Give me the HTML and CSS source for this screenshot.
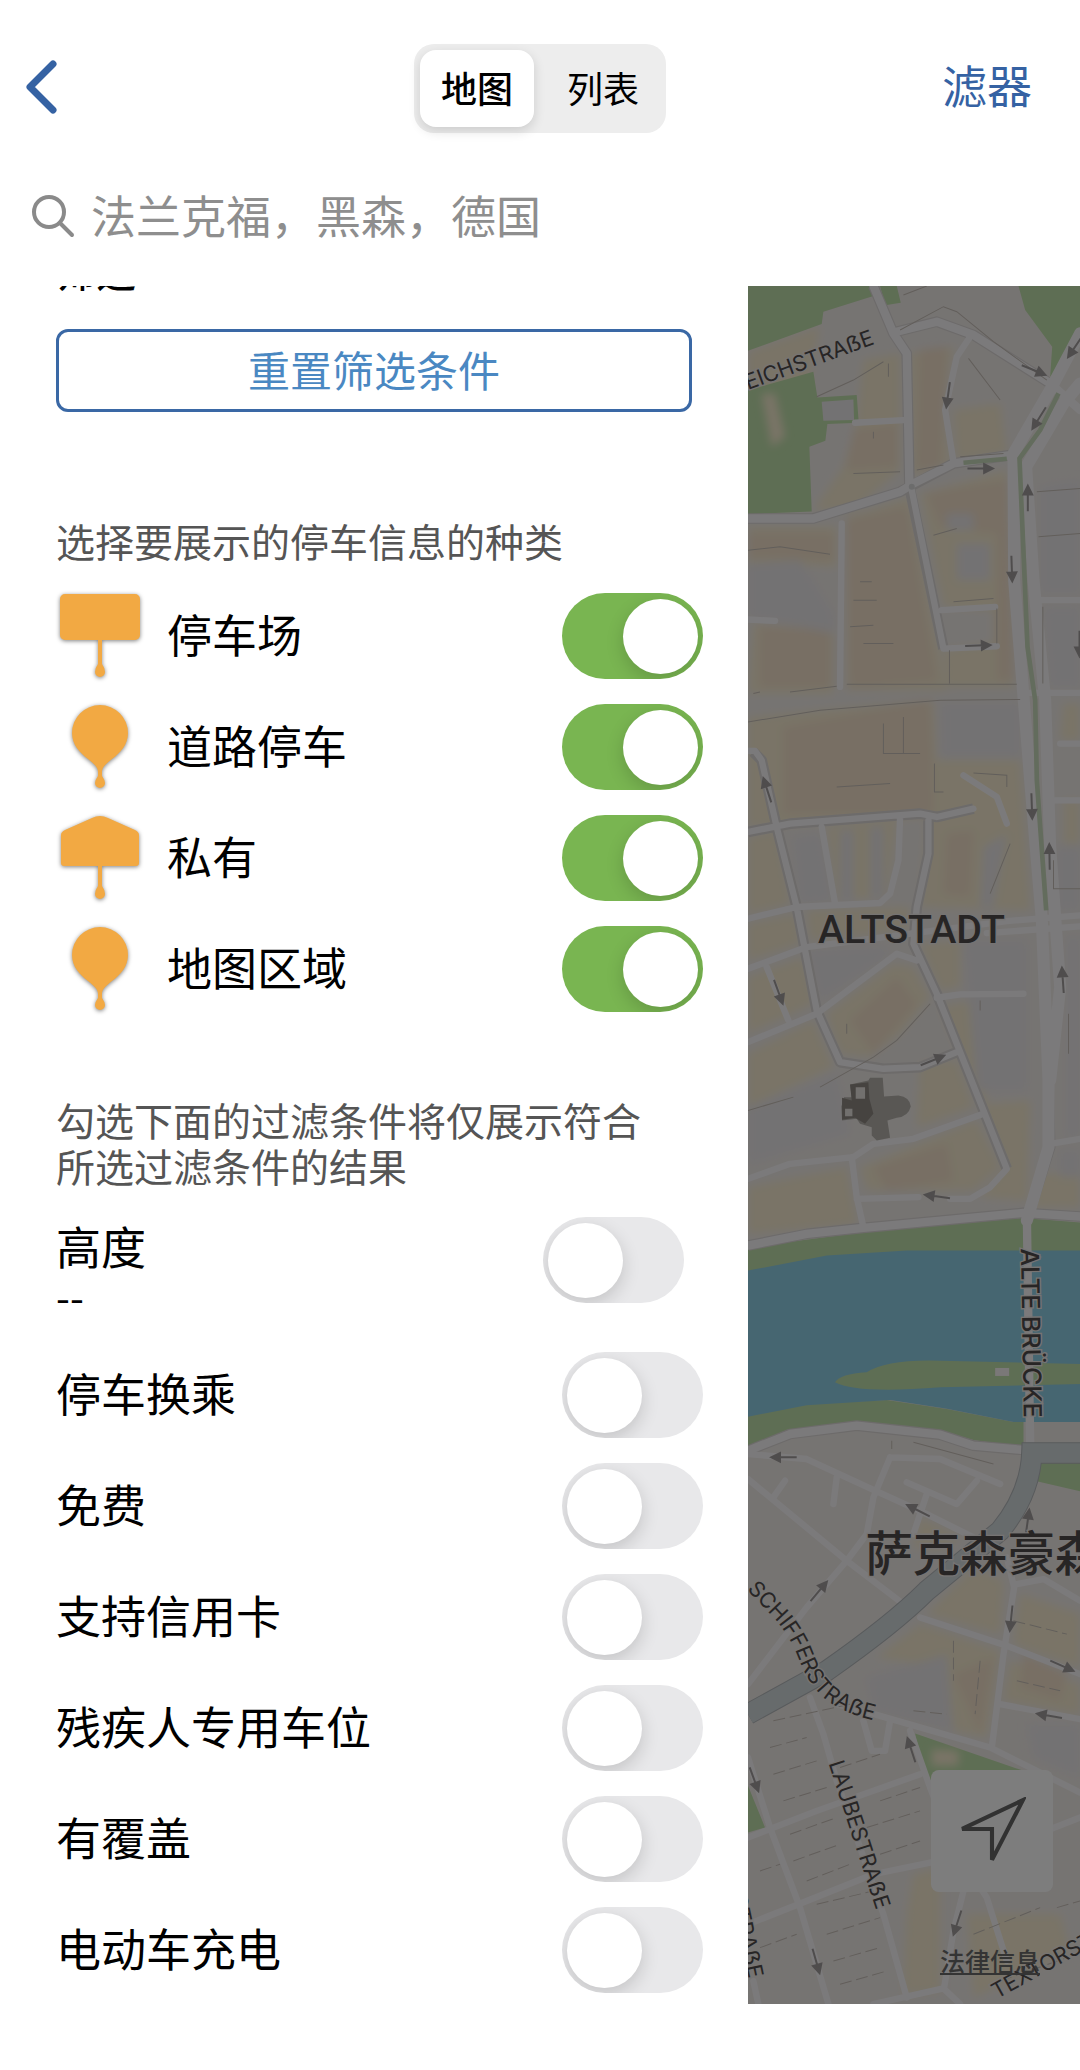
FILE: index.html
```html
<!DOCTYPE html>
<html lang="zh-CN">
  <head>
    <meta charset="UTF-8" />
    <meta name="viewport" content="width=device-width, initial-scale=1.0" />
    <title>停车</title>
    <link rel="stylesheet" href="styles.css">
  </head>
  <body>
    <header>
      <div class="topbar">
        <button class="backBtn" aria-label="返回">
          <svg viewBox="0 0 32 54"><path d="M28 4 5 27l23 23" /></svg>
        </button>
        <div class="segment">
          <button class="active">地图</button>
          <button>列表</button>
        </div>
        <button class="filterBtn">滤器</button>
      </div>
      <label class="search">
        <svg viewBox="0 0 44 44">
          <circle cx="18" cy="18" r="15" />
          <path d="M29 29 41 41" />
        </svg>
        <input type="text" placeholder="法兰克福，黑森，德国" aria-label="搜索" />
      </label>
    </header>

    <main>
      <section class="drawer">
        <h1>筛选</h1>
        <button class="resetBtn">重置筛选条件</button>

        <p class="hint">选择要展示的停车信息的种类</p>
        <div class="list">
          <div class="row">
            <svg class="pin" viewBox="0 0 86 86">
              <path d="M9 1h70a5 5 0 0 1 5 5v36a5 5 0 0 1-5 5H46v24q3 4 3 8a5 5 0 0 1-10 0q0-4 3-8V47H9a5 5 0 0 1-5-5V6a5 5 0 0 1 5-5z" />
            </svg>
            <label for="lot">停车场</label>
            <input type="checkbox" class="toggle" id="lot" checked />
          </div>
          <div class="row">
            <svg class="pin" viewBox="0 0 86 86">
              <path d="M44 1a28 28 0 0 1 28 28c0 12-8 20-16 26-6 5-10 8-10 13v4q3 4 3 7a5 5 0 0 1-10 0q0-3 3-7v-4c0-5-4-8-10-13-8-6-16-14-16-26A28 28 0 0 1 44 1z" />
            </svg>
            <label for="street">道路停车</label>
            <input type="checkbox" class="toggle" id="street" checked />
          </div>
          <div class="row">
            <svg class="pin" viewBox="0 0 86 86">
              <path d="M36 3q8-4 16 0l27 12q4 2 4 5v28q0 3-3 3H46v20q3 4 3 8a5 5 0 0 1-10 0q0-4 3-8V51H8q-3 0-3-3V20q0-3 4-5z" />
            </svg>
            <label for="private">私有</label>
            <input type="checkbox" class="toggle" id="private" checked />
          </div>
          <div class="row">
            <svg class="pin" viewBox="0 0 86 86">
              <path d="M44 1a28 28 0 0 1 28 28c0 12-8 20-16 26-6 5-10 8-10 13v4q3 4 3 7a5 5 0 0 1-10 0q0-3 3-7v-4c0-5-4-8-10-13-8-6-16-14-16-26A28 28 0 0 1 44 1z" />
            </svg>
            <label for="area">地图区域</label>
            <input type="checkbox" class="toggle" id="area" checked />
          </div>
        </div>

        <p class="hint second">勾选下面的过滤条件将仅展示符合所选过滤条件的结果</p>
        <div class="row height">
          <div>
            <label for="height">高度</label>
            <p>--</p>
          </div>
          <input type="checkbox" class="toggle" id="height" />
        </div>
        <div class="list">
          <div class="row">
            <label for="ride">停车换乘</label>
            <input type="checkbox" class="toggle" id="ride" />
          </div>
          <div class="row">
            <label for="free">免费</label>
            <input type="checkbox" class="toggle" id="free" />
          </div>
          <div class="row">
            <label for="card">支持信用卡</label>
            <input type="checkbox" class="toggle" id="card" />
          </div>
          <div class="row">
            <label for="disabled">残疾人专用车位</label>
            <input type="checkbox" class="toggle" id="disabled" />
          </div>
          <div class="row">
            <label for="covered">有覆盖</label>
            <input type="checkbox" class="toggle" id="covered" />
          </div>
          <div class="row">
            <label for="charge">电动车充电</label>
            <input type="checkbox" class="toggle" id="charge" />
          </div>
        </div>
      </section>

      <section class="map">
        <svg class="mapImg" viewBox="24 18 996 5151" preserveAspectRatio="xMinYMin slice">
          <defs>
            <path id="arrow" d="M-38 0H36M12-13 38 0 12 13z" />
            <path id="schiffer" d="M-90 3810 100 4010Q150 4066 175 4130 210 4225 270 4265 330 4303 400 4318" />
            <filter id="soft"><feGaussianBlur stdDeviation="12" /></filter>
          </defs>

          <!-- blocks -->
          <g filter="url(#soft)">
            <path class="sand" d="M24 215 240 140 200 330 24 330zM370 240 480 220 480 570 340 690 220 690 310 560 350 430zM510 220 640 200 610 380 630 550 515 590zM640 390 780 370 800 520 650 540zM540 640 800 570 820 1220 620 1220 610 1110 760 1090 760 990 610 980z" />
            <path class="sand" d="M24 740 290 740 290 860 24 850zM320 710 510 650 600 1120 620 1230 320 1230zM40 1030 280 1050 280 1240 24 1240zM24 1310 580 1260 590 1440 840 1440 870 1890 540 1880 560 1610 24 1640z" />
            <path class="sand" d="M24 1670 110 1650 150 1870 24 1900zM260 1640 470 1620 440 1850 290 1860zM24 1930 170 1900 180 1990 24 2040zM200 1890 510 1880 500 1950 210 1980zM24 2090 190 2030 220 2170 24 2260zM260 2200 460 2050 520 2060 570 2150 480 2260 390 2330 300 2320zM24 2320 220 2220 280 2360 24 2480z" />
            <path class="sand" d="M540 1990 660 1980 660 2120 600 2130zM600 2180 700 2160 740 2470 870 2460 860 2760 720 2750 800 2660zM360 2660 710 2520 780 2660 700 2730 380 2730zM24 2720 320 2660 350 2830 24 2860zM540 2350 650 2340 700 2480 530 2540z" />
            <path class="sand" d="M970 1270h50v110h-60zM970 1560h50v130h-50zM890 2680h130v100h-140zM540 3710 660 3770 600 3810 520 3800zM560 4000 700 3860 790 3900 780 4060zM840 3940 1020 4000v160L820 4090zM410 4130 540 4030 780 4110 740 4370 640 4350 620 4160zM810 4140 1020 4210v90L790 4260zM520 4780 600 4760 600 5130 490 5140 500 4900zM680 4900 960 4900 990 5010 700 5150z" />
            <path class="peach" d="M540 210 620 200 600 560 530 570zM340 450 470 430 470 560 320 570zM560 640 800 600 820 1200 770 1200 770 760 600 740zM320 720 500 680 590 1200 330 1220zM24 760 280 760 280 840 24 830zM130 1340 570 1260 580 1600 130 1600zM60 1040 270 1050 270 1220 60 1220zM620 1660 700 1650 690 1850 610 1840zM330 2220 470 2090 530 2170 400 2320zM400 2660 620 2590 640 2700 440 2730zM640 4180 760 4130 720 4360zM850 4120 980 4180 960 4260 840 4220z" />
            <path class="lavender" d="M24 850 180 840 280 1000 280 1060 24 1010zM650 790h100v110H650zM620 700h80v50h-80zM160 1670 240 1660 280 1860 180 1870zM300 1650 340 1650 340 1860 300 1860zM390 1640 430 1640 430 1850 390 1850zM200 2010 440 2000 440 2030 240 2160zM730 1700 800 1660 760 1880 720 1880zM600 1270h240v160H600zM670 1980h190v450H710zM24 2480 290 2380 330 2560 24 2650z" />
            <path class="lavender" d="M900 620 1020 600v340H900zM910 980h110v240h-90zM950 1700h70v190h-70zM980 1970h40v600h-40zM380 4190 620 4120 640 4350 400 4290zM860 4330 1020 4330v160L880 4430zM960 2610h60v80h-60z" />
          </g>

          <!-- parks -->
          <g class="park">
            <path d="M24 18H390L400 48 250 95 245 132 24 212zM420 18h50l12 50-47 8z" />
            <path d="M24 330 220 275 232 352 350 345 356 428 262 432 256 482 208 500 215 694 24 702z" />
            <path d="M835 18h185v140L958 270 930 290 936 200 855 90z" />
            <path d="M24 2900 370 2855 850 2812 1020 2826V2912H500L260 2928 24 2975z" />
            <path d="M24 3405 150 3372 440 3358 620 3385 820 3424H850V3500L700 3478 600 3450 350 3425 150 3450 24 3500z" />
            <path d="M895 3540H1020V3632L890 3602zM525 4358 850 4470 590 4480 565 4520zM24 4515 75 4640 24 4655z" />
          </g>
          <path class="sand" filter="url(#soft)" d="M65 342 105 340 135 470 95 500zM575 4405 655 4410 655 4455 575 4455z" />
          <path class="lavender" d="M245 365 340 358 342 420 250 422z" />

          <!-- river Main -->
          <path class="water" d="M24 2970 260 2925 500 2910H1020V3424H820L620 3384 450 3358 200 3374 24 3408z" />
          <path class="park" d="M285 3305Q300 3280 380 3275 440 3235 600 3240L1020 3250V3310L600 3320Q350 3340 285 3305z" />
          <path class="road-fill" d="M765 3262h42v24h-42z" />

          <!-- roads -->
          <g class="edge">
            <path d="M24 715H220L480 635 640 550 810 525M400 18 460 160 500 220 508 620 610 1105M470 155 590 125 700 165 930 310M820 540 822 900 870 1500 905 1920 925 2400 930 2600 860 2820M850 560 880 900 915 1260 930 1700 960 2120 930 2360M24 2895 200 2860 370 2842 850 2797 1020 2808M24 3510 150 3460 350 3435 600 3462 700 3495 850 3508M24 1655 150 1630 540 1600 590 1610 700 1585M40 1415 65 1440 110 1640 170 1880 230 2190 300 2345 430 2365 540 2360 650 2315M565 1620 565 1720 530 1880 520 1990 590 2140 650 2290 800 2665" />
          </g>
          <g class="road">
            <path d="M24 715H220L480 635 520 610 640 550 810 525M400 18 460 160 500 220 508 620M470 155 590 125 700 165 930 310" />
            <path d="M24 2895 200 2860 370 2842 850 2797 1020 2808M24 3510 150 3460 350 3435 600 3462 700 3495 850 3508" />
            <path class="wide" d="M1020 160 930 330 820 520 822 900 870 1500 905 1920 925 2400 925 2600 860 2820M1020 310 970 370 858 560 880 900 915 1260 930 1700 960 2120 930 2400" />
            <path d="M900 2690 860 2800 870 3490M930 310 1020 390" />
            <path class="mid" d="M690 170 650 230 615 390 640 545M515 630 610 1105 770 1098M605 990 765 980M305 730 300 1220M885 960H1020M870 1238H1020M345 428 490 420M24 1018 105 1022M960 1390H1020M945 1560H1020" />
            <path class="mid" d="M24 1655 150 1630 540 1600 590 1610 700 1585M24 1412H45L65 1440 110 1640 170 1880 230 2190 300 2345 430 2365 540 2360 650 2315M245 1640 285 1870M480 1610 475 1740 450 1840 420 1868 170 1880 24 1915M565 1620 565 1720 530 1880 520 1990 590 2140 650 2290 800 2665 750 2720 690 2755 630 2755M670 1485 770 1550 800 1630" />
            <path class="mid" d="M24 2065 200 2000 800 1922 1020 1905M740 1958 1020 1938M24 2285 230 2200 470 2020 530 2040M590 2152 660 2142 850 2140M80 2060 145 2220M24 2695 150 2650 340 2630 400 2590 520 2575 730 2500M335 2630 350 2750 370 2840M350 2755 535 2750M930 2590 1020 2575" />
            <path class="mid" d="M24 3520 200 3535 410 3632 560 3700 700 3770M24 3595 320 3840 490 3970M450 3530 400 3650 380 3760 320 3840 200 3980 24 4210M450 3530 600 3535 780 3610M500 3605 650 3670 710 3600M560 3640 520 3760M290 3590 280 3670M135 3600 100 3650" />
            <path class="mid" d="M800 3830 822 3920 790 4120 755 4400M830 3910 910 3895 1020 3960M540 4010 800 4095 1020 4180M780 4270 1020 4315M290 4270 420 4305 750 4400 1020 4535M210 4250 250 4360 290 4500 430 4900 500 5150M24 4670 230 4590 540 4480M24 4930 200 4860 400 4780 570 4745M24 4430 90 4640 180 4880 265 5169M510 4350 570 4520 640 4700 740 4850 800 5040M670 4830 640 4950 612 5120M400 5169 610 5122 660 5169M370 4320 395 4410 435 4410 450 4320M930 4645 1020 4610M40 5100 55 5169" />
          </g>
          <path class="median" d="M955 340 900 450 838 535 845 700 862 1100 885 1260 890 1500 918 1890" />
          <path class="median" d="M670 548 800 536" />
          <circle class="ring" cx="515" cy="620" r="9" />

          <!-- railway -->
          <path class="rail-edge" d="M1020 3517H875Q870 3640 780 3750L560 3930Q460 4030 260 4170L24 4300" />
          <path class="rail" d="M1020 3517H875Q870 3640 780 3750L560 3930Q460 4030 260 4170L24 4300" />

          <!-- footpaths and house lines -->
          <path class="path" d="M24 1325 240 1290 600 1260 840 1258M480 150 610 80 650 95 760 185 920 300M230 350 340 300 430 245M490 45 560 18M685 235 780 360M24 2490 160 2450M240 2420 400 2330 470 2280 570 2170M750 1840 770 1790 810 1690M24 810 120 800 270 822M320 1212H830M890 635 1020 625M895 770 1020 760M908 980V1210M628 1110V1210M580 765 650 745M360 905H395M340 960H410M330 1040 400 1035M370 1090H460M400 455V475M340 580 480 575M660 530 790 520M530 570 610 555M445 250V290" />
          <path class="path" d="M430 1330V1420H540M490 1310V1420M583 1450V1535H610M700 1478 800 1485V1520M940 1740V1825H1020M985 2200V2320M720 2160V2190M320 2230V2260M640 965 760 955M770 985V1090M290 1520 450 1510M455 3480V3505M40 1240 60 1235M150 1235 290 1218M520 3485 760 3550" />
          <path class="path dash" d="M100 4320 330 4270M90 4400 200 4370M300 4460 420 4420M100 4480 230 4440M130 4560 260 4520M150 4660 290 4610M160 4740 300 4690M420 4560 540 4520M380 4640 540 4590M420 4720 540 4680M200 4800 330 4750M230 4870 400 4830M260 4960 420 4910M280 5040 420 5000M300 5110 440 5070M60 5000 170 4960M60 4770 120 4750M520 4290 620 4300M820 4020 980 4060M830 4200 960 4230M700 4960 900 4880M780 5100 980 5030M950 4880 1020 4860M640 4080V4200M720 4140 705 4300" />

          <!-- cathedral -->
          <path class="dome" d="M330 2412 385 2400 390 2392H428L432 2448 475 2445Q510 2450 512 2478 505 2508 470 2512L442 2520 450 2572 410 2580 395 2565V2540L360 2530 350 2515 306 2520 304 2478 312 2450 335 2450z" />
          <path class="dome-dark" d="M330 2412 385 2405 388 2455 400 2500 375 2530 345 2512 306 2518V2452L335 2460z" />
          <path class="dome-gap" d="M347 2420h28v35h-28zM315 2485h22v22h-22z" />

          <!-- driving directions -->
          <g class="arrows">
            <use href="#arrow" transform="translate(880 270) rotate(22)" />
            <use href="#arrow" transform="translate(1005 200) rotate(124)" />
            <use href="#arrow" transform="translate(897 414) rotate(122)" />
            <use href="#arrow" transform="translate(624 344) rotate(98)" />
            <use href="#arrow" transform="translate(720 565)" />
            <use href="#arrow" transform="translate(863 655) rotate(-90)" />
            <use href="#arrow" transform="translate(815 865) rotate(88)" />
            <use href="#arrow" transform="translate(713 1096) rotate(-2)" />
            <use href="#arrow" transform="translate(1018 1090) rotate(90)" />
            <use href="#arrow" transform="translate(82 1530) rotate(-108)" />
            <use href="#arrow" transform="translate(875 1577) rotate(88)" />
            <use href="#arrow" transform="translate(928 1730) rotate(-91)" />
            <use href="#arrow" transform="translate(968 2100) rotate(-94)" />
            <use href="#arrow" transform="translate(115 2134) rotate(70)" />
            <use href="#arrow" transform="translate(577 2340) rotate(-22)" />
            <use href="#arrow" transform="translate(592 2748) rotate(188)" />
            <use href="#arrow" transform="translate(132 3530) rotate(180)" />
            <use href="#arrow" transform="translate(535 3690) rotate(207)" />
            <use href="#arrow" transform="translate(862 3725) rotate(-82)" />
            <use href="#arrow" transform="translate(236 3932) rotate(-50)" />
            <use href="#arrow" transform="translate(813 4012) rotate(96)" />
            <use href="#arrow" transform="translate(965 4155) rotate(24)" />
            <use href="#arrow" transform="translate(928 4305) rotate(190)" />
            <use href="#arrow" transform="translate(514 4408) rotate(-108)" />
            <use href="#arrow" transform="translate(42 4495) rotate(70)" />
            <use href="#arrow" transform="translate(652 4925) rotate(108)" />
            <use href="#arrow" transform="translate(228 5040) rotate(74)" />
          </g>

          <!-- labels -->
          <g class="street">
            <text transform="translate(24 330) rotate(-20)">EICHSTRAẞE</text>
            <text><textPath href="#schiffer" startOffset="100%" text-anchor="end">SCHIFFERSTRAẞE</textPath></text>
            <text transform="translate(265 4447) rotate(72)">LAUBESTRAẞE</text>
            <text transform="translate(26 5094) rotate(78)" text-anchor="end">STRAẞE</text>
            <text transform="translate(770 5155) rotate(-29)">TEXTORSTRAẞE</text>
          </g>
          <text class="bridge" transform="translate(842 2904) rotate(89)">ALTE BRÜCKE</text>
          <text class="district" x="234" y="1987">ALTSTADT</text>
          <text class="quarter" x="376" y="3872">萨克森豪森</text>
        </svg>
        <button class="locateBtn" aria-label="我的位置">
          <svg viewBox="0 0 66 66"><path d="M63 3 4 31H33V61z" /></svg>
        </button>
        <a href="#" class="legal">法律信息</a>
        <div class="dim"></div>
      </section>
    </main>
  </body>
</html>
```

FILE: styles.css
```css
* {
  margin: 0;
  padding: 0;
  box-sizing: border-box;
  font-family: "Noto Sans CJK SC", sans-serif;
}
body {
  background-color: #fff;
  color: #000;
  min-height: 100vh;
}
button {
  padding-bottom: 4px;
  background: none;
  border: none;
  cursor: pointer;
}
header {
  height: 286px;
  padding: 44px 46px 0 25px;
}
.topbar {
  display: grid;
  grid-template-columns: 1fr auto 1fr;
  align-items: center;
  height: 89px;
  margin-right: -21px;
}
.backBtn {
  justify-self: start;
  height: 58px;
}
.backBtn svg {
  display: block;
  width: 32px;
  height: 54px;
  fill: none;
  stroke: #3562a3;
  stroke-width: 7;
  stroke-linecap: round;
  stroke-linejoin: round;
}
.segment {
  display: flex;
  width: 252px;
  height: 89px;
  padding: 6px;
  background-color: #ededed;
  border-radius: 20px;
}
.segment button {
  flex: 1;
  padding-left: 12px;
  font-size: 36px;
  border-radius: 16px;
}
.segment .active {
  flex: 0 0 114px;
  padding-left: 0;
  background-color: #fff;
  font-weight: 500;
  box-shadow: 0 4px 12px rgba(0, 0, 0, 0.14);
}
.filterBtn {
  justify-self: end;
  margin-right: 23px;
  padding-bottom: 8px;
  color: #3562a3;
  font-size: 45px;
}
.search {
  display: flex;
  align-items: center;
  gap: 16px;
  height: 60px;
  margin: 53px 0 0 6px;
}
.search svg {
  width: 44px;
  height: 44px;
  fill: none;
  stroke: #8a8a8a;
  stroke-width: 4;
  stroke-linecap: round;
}
.search input {
  flex: 1;
  height: 60px;
  padding-bottom: 4px;
  border: none;
  outline: none;
  font-size: 45px;
}
.search input::placeholder {
  color: #8e8e8e;
}
main {
  display: grid;
  grid-template-columns: 748fr 332fr;
}
.drawer {
  overflow: hidden;
  padding: 0 45px 11px 56px;
}
.drawer h1 {
  font-size: 40px;
  font-weight: 500;
  line-height: 50px;
  margin-top: -41px;
}
.resetBtn {
  display: block;
  width: calc(100% - 11px);
  height: 83px;
  margin-top: 34px;
  border: 3px solid #3a68a5;
  border-radius: 12px;
  color: #4a88c2;
  font-size: 42px;
}
.hint {
  margin: 105px 0 30px;
  color: #555;
  font-size: 39px;
  line-height: 46px;
}
.hint.second {
  margin: 84px 40px 29px 0;
}
.list {
  display: flex;
  flex-direction: column;
  gap: 25px;
}
.row {
  display: flex;
  align-items: center;
  height: 86px;
}
.row label {
  display: block;
  flex: 1;
  padding-bottom: 4px;
  font-size: 45px;
  line-height: 58px;
}
.pin {
  width: 86px;
  height: 86px;
  margin-right: 25px;
  fill: #f2a943;
  filter: drop-shadow(0 1px 2px rgba(0, 0, 0, 0.5));
}
.row.height {
  height: 123px;
  margin-bottom: 12px;
  padding-right: 19px;
  align-items: flex-start;
  justify-content: space-between;
}
.row.height p {
  font-size: 40px;
  line-height: 34px;
}
.toggle {
  appearance: none;
  width: 141px;
  height: 86px;
  padding: 6px 5px;
  background-color: #e8e8ea;
  border-radius: 43px;
  overflow: hidden;
  cursor: pointer;
}
.toggle::before {
  content: "";
  display: block;
  width: 75px;
  height: 75px;
  background-color: #fff;
  border-radius: 50%;
  box-shadow: 0 6px 18px rgba(0, 0, 0, 0.16);
}
.toggle:checked {
  background-color: #79b551;
}
.toggle:checked::before {
  margin-left: 56px;
}
.map {
  position: relative;
  overflow: hidden;
  background-color: #f1ece9;
}
.mapImg {
  position: absolute;
  width: 100%;
  height: 100%;
}
.sand {
  fill: #f8edd2;
}
.peach {
  fill: #f4e2cc;
}
.lavender {
  fill: #ebe8ea;
}
.park {
  fill: #c0e0ab;
}
.water {
  fill: #90d0e6;
}
.road-fill {
  fill: #f8f4f4;
}
.edge path {
  fill: none;
  stroke: #dedad9;
  stroke-width: 32;
  stroke-linejoin: round;
}
.road path {
  fill: none;
  stroke: #fbf9fb;
  stroke-width: 25;
  stroke-linejoin: round;
  stroke-linecap: round;
}
.road .mid {
  stroke-width: 19;
}
.road .wide {
  stroke-width: 36;
}
.median {
  fill: none;
  stroke: #cbdcbd;
  stroke-width: 14;
}
.ring {
  fill: #ddd;
}
.rail,
.rail-edge {
  fill: none;
  stroke: #d3dadd;
  stroke-width: 58;
}
.rail-edge {
  stroke: #b4b9bc;
  stroke-width: 64;
}
.path {
  fill: none;
  stroke: #c8c1b9;
  stroke-width: 3;
}
.path.dash {
  stroke-dasharray: 36 14;
}
.dome {
  fill: #b5b2ac;
}
.dome-dark {
  fill: #908a84;
}
.dome-gap {
  fill: #e8e4e0;
}
.arrows {
  fill: #a29d9d;
  stroke: #a29d9d;
  stroke-width: 6;
}
.street text,
.bridge,
.district,
.quarter {
  fill: #504c4c;
  stroke: #f1ecea;
  stroke-width: 8;
  paint-order: stroke;
}
.street text,
.street textPath {
  font-family: Inter, sans-serif;
  font-size: 65px;
}
.bridge {
  font-family: Inter, sans-serif;
  font-size: 75px;
  font-weight: 500;
}
.district {
  font-family: Roboto, sans-serif;
  font-size: 118px;
  font-weight: 500;
}
.quarter {
  font-size: 142px;
  font-weight: 500;
}
.locateBtn {
  position: absolute;
  right: 27px;
  bottom: 112px;
  width: 122px;
  height: 122px;
  padding: 27px;
  background-color: #fff;
  border-radius: 8px;
}
.locateBtn svg {
  display: block;
  width: 68px;
  height: 68px;
  fill: none;
  stroke: #666;
  stroke-width: 4;
}
.legal {
  position: absolute;
  right: 40px;
  bottom: 26px;
  color: #6a6a6a;
  font-size: 25px;
  font-weight: 500;
}
.dim {
  position: absolute;
  inset: 0;
  background-color: rgba(0, 0, 0, 0.51);
}
```
